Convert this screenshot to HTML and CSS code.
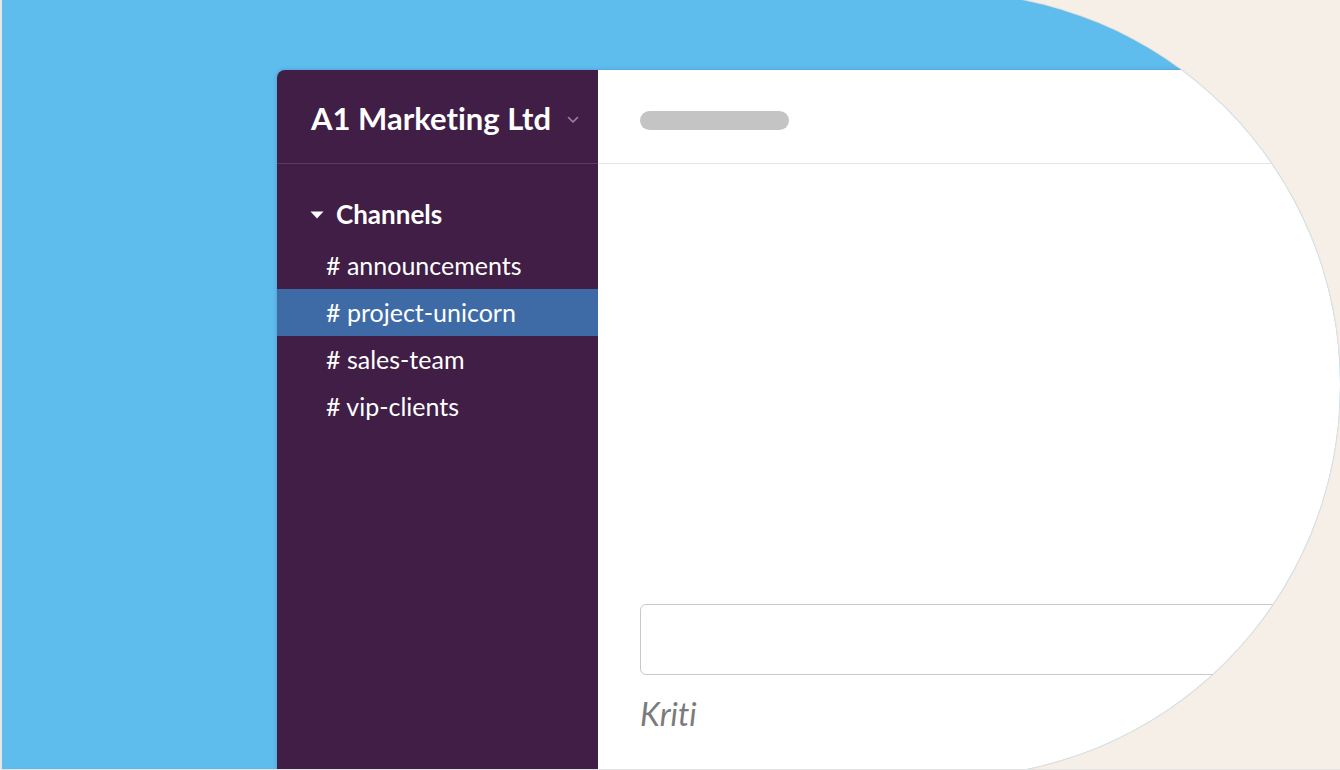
FILE: index.html
```html
<!DOCTYPE html>
<html lang="en">
<head>
<meta charset="utf-8">
<title>A1 Marketing Ltd</title>
<link rel="stylesheet" href="styles.css">
</head>
<body>
<div class="stage">
  <div class="blob">
    <div class="window">
      <aside class="sidebar">
        <div class="team">
          <span class="team-name">A1 Marketing Ltd</span>
          <svg class="chev" width="12" height="8" viewBox="0 0 12 8"><polyline points="1.5,1.5 6,6 10.5,1.5" fill="none" stroke="#9c84a2" stroke-width="1.6" stroke-linecap="round" stroke-linejoin="round"/></svg>
        </div>
        <div class="channels">
          <div class="section-title">
            <svg class="caret" width="14" height="8" viewBox="0 0 14 8"><polygon points="0.5,0.5 13.5,0.5 7,7.5" fill="#ffffff"/></svg>
            <span>Channels</span>
          </div>
          <ul class="channel-list">
            <li class="channel"># announcements</li>
            <li class="channel active"># project-unicorn</li>
            <li class="channel"># sales-team</li>
            <li class="channel"># vip-clients</li>
          </ul>
        </div>
      </aside>
      <main class="main">
        <div class="main-header"><span class="pill"></span></div>
        <div class="messages"></div>
        <div class="composer"></div>
        <div class="typing">Kriti</div>
      </main>
    </div>
  </div>
</div>
</body>
</html>
```

FILE: styles.css
```css
* { box-sizing: border-box; }
html, body { margin: 0; padding: 0; }
body {
  font-family: Lato, "Open Sans", sans-serif;
  font-variant-ligatures: none;
  background: #f5efe8;
}
.stage {
  width: 1340px;
  height: 770px;
  overflow: hidden;
  background: #f5efe8;
  border-left: 2px solid #e4e7e8;
  border-bottom: 1px solid #e2e2e2;
}
.blob {
  width: 1338px;
  height: 784px;
  margin-top: -7px;
  padding: 77px 0 0 275px;
  background: #5fbdee;
  border-radius: 0 392px 392px 0;
  overflow: hidden;
  box-shadow: 0 0 0 1px rgba(120, 110, 100, 0.12);
}
.window {
  display: flex;
  height: 720px;
  border-top-left-radius: 8px;
  box-shadow: 0 0 4px rgba(20, 40, 80, 0.25);
}
.sidebar {
  width: 321px;
  flex: none;
  background: #401e46;
  border-top-left-radius: 8px;
  color: #fff;
}
.team {
  height: 94px;
  border-bottom: 1px solid rgba(255, 255, 255, 0.14);
  display: flex;
  align-items: center;
  padding: 2px 0 0 34px;
}
.team-name {
  font-weight: 700;
  font-size: 31px;
}
.chev { margin-left: 16px; margin-top: 4px; }
.channels { padding-top: 26px; }
.section-title {
  height: 47px;
  display: flex;
  align-items: center;
  padding-left: 33px;
  font-weight: 700;
  font-size: 26px;
}
.caret { margin-right: 12px; margin-top: 2px; }
.channel-list { list-style: none; margin: 5px 0 0; padding: 0; }
.channel {
  height: 47px;
  line-height: 47px;
  padding-left: 49px;
  font-size: 25px;
  color: #fff;
}
.channel.active { background: #3e6ba6; }
.main {
  flex: 1;
  background: #fff;
  display: flex;
  flex-direction: column;
  padding-left: 42px;
}
.main-header {
  height: 94px;
  margin-left: -42px;
  padding: 41px 0 0 42px;
  border-bottom: 1px solid #e4e4e4;
}
.pill {
  display: block;
  width: 149px;
  height: 19px;
  border-radius: 10px;
  background: #c4c4c4;
}
.messages { height: 440px; }
.composer {
  height: 71px;
  border: 1.5px solid #c9c9c9;
  border-radius: 6px;
}
.typing {
  margin-top: 20px;
  font-size: 32px;
  line-height: 38px;
  font-style: italic;
  color: #7b7b7b;
}
```
